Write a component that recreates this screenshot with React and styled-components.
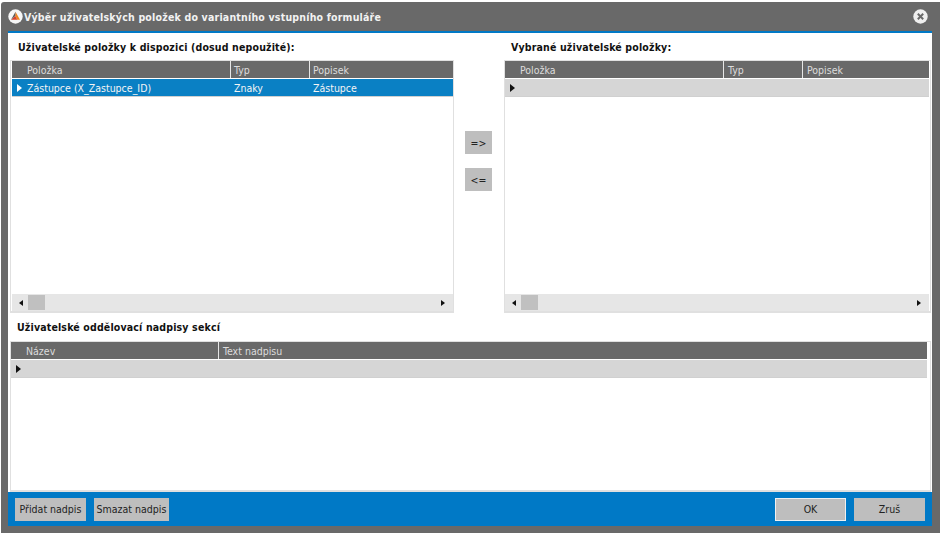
import React from 'react';
import styled, { createGlobalStyle } from 'styled-components';

const GlobalStyle = createGlobalStyle`
    html, body { margin: 0; padding: 0; background: #fff; }
    body { font-family: "DejaVu Sans", "Liberation Sans", Arial, sans-serif; font-stretch: condensed; font-size: 10.5px; color: #222; }
`;

const Page = styled.div`
    width: 940px;
    height: 534px;
    padding: 2px 0 1px 1px;
    box-sizing: border-box;
    overflow: hidden;
`;

const Dialog = styled.div`
    height: 100%;
    display: flex;
    flex-direction: column;
    padding: 0 8px 7px 7px;
    box-sizing: border-box;
    background: #696969;
    border-top-left-radius: 3px;
`;

const TitleBar = styled.div`
    height: 29px;
    flex: none;
    display: flex;
    align-items: center;
    gap: 1px;
    padding: 0 4px 0 0;
`;

const Title = styled.div`
    flex: 1;
    font-size: 10.5px;
    font-weight: 700;
    letter-spacing: 0.2px;
    color: #f2f2f2;
`;

const Body = styled.div`
    flex: 1;
    min-height: 0;
    display: flex;
    flex-direction: column;
    background: #fff;
    border-top: 2px solid #0079c6;
    padding: 0 1px 0 2px;
`;

const TopRow = styled.div`
    display: flex;
    height: 280px;
    flex: none;
`;

const Column = styled.div`
    width: ${props => props.$width}px;
    flex: none;
    display: flex;
    flex-direction: column;
`;

const Heading = styled.div`
    height: ${props => props.$height}px;
    flex: none;
    display: flex;
    align-items: center;
    padding-left: ${props => props.$indent}px;
    font-size: 10.5px;
    font-weight: 700;
    letter-spacing: 0.16px;
    color: #111;
`;

const Panel = styled.div`
    flex: 1;
    min-height: 0;
    display: flex;
    flex-direction: column;
    border: 1px solid #e0e0e0;
    border-width: 1px 1px 2px 1px;
    padding-left: ${props => props.$insetLeft}px;
    padding-right: ${props => props.$insetRight}px;
`;

const HeaderRow = styled.div`
    height: 17px;
    flex: none;
    display: flex;
    background: #696969;
    border-bottom: 1px solid #fff;
`;

const HeaderCell = styled.div`
    width: ${props => props.$width}px;
    flex: none;
    box-sizing: border-box;
    padding-left: ${props => props.$indent}px;
    line-height: 18px;
    color: #dcdcdc;
    border-right: ${props => props.$last ? 'none' : '1px solid #e6e6e6'};
`;

const DataRow = styled.div`
    height: 17px;
    flex: none;
    display: flex;
    align-items: center;
    background: ${props => props.$selected ? '#0a80c4' : '#d6d6d6'};
    border-bottom: 1px solid #d0d0d0;
    color: #f4f4f4;
`;

const RowMarker = styled.span`
    width: 0;
    height: 0;
    flex: none;
    margin-left: 5px;
    border-style: solid;
    border-width: 4px 0 4px 5px;
    border-color: transparent transparent transparent ${props => props.$selected ? '#fff' : '#111'};
`;

const DataCell = styled.div`
    width: ${props => props.$width}px;
    flex: none;
    box-sizing: border-box;
    padding-left: ${props => props.$indent}px;
`;

const GridSpace = styled.div`
    flex: 1;
`;

const ScrollBar = styled.div`
    height: 17px;
    flex: none;
    display: flex;
    align-items: center;
    background: #e6e6e6;
    padding: 0 8px 0 7px;
`;

const ScrollThumb = styled.div`
    width: 17px;
    height: 15px;
    margin-left: 5px;
    background: #c0c0c0;
`;

const ScrollArrow = styled.span`
    width: 0;
    height: 0;
    flex: none;
    border-style: solid;
    border-width: 3.5px ${props => props.$right ? 0 : '4px'} 3.5px ${props => props.$right ? '4px' : 0};
    border-color: transparent ${props => props.$right ? 'transparent' : '#111'} transparent ${props => props.$right ? '#111' : 'transparent'};
    margin-left: ${props => props.$right ? 'auto' : 0};
`;

const MoveColumn = styled.div`
    width: 50px;
    flex: none;
    display: flex;
    flex-direction: column;
    align-items: flex-start;
    gap: 14px;
    padding: 98px 0 0 11px;
    box-sizing: border-box;
`;

const MoveButton = styled.div`
    width: 27px;
    height: 23px;
    display: flex;
    align-items: center;
    justify-content: center;
    background: #bebebe;
    color: #222;
`;

const Footer = styled.div`
    height: 34px;
    flex: none;
    display: flex;
    align-items: center;
    gap: 8px;
    padding: 0 7px 0 7px;
    background: #0079c6;
`;

const FooterButton = styled.div`
    width: ${props => props.$width}px;
    height: 23px;
    flex: none;
    box-sizing: border-box;
    display: flex;
    align-items: center;
    justify-content: center;
    background: #bebebe;
    color: #222;
    border: ${props => props.$focused ? '1px solid #f0f0f0' : 'none'};
`;

const FooterGap = styled.div`
    flex: 1;
`;

const Logo = () => (
    <svg width="15" height="15" viewBox="0 0 15 15">
        <circle cx="7.5" cy="7.5" r="7.2" fill="#f6f6f6" />
        <path d="M7.5 2.8 L12 10.8 L9.4 10.8 L7.2 7 Z" fill="#ee8420" />
        <path d="M7.2 7 L9.4 10.8 L3 10.8 Z" fill="#d8402a" />
        <path d="M7.5 2.8 L7.2 7 L3 10.8 Z" fill="#5a5a5a" />
    </svg>
);

const CloseIcon = () => (
    <svg width="15" height="15" viewBox="0 0 15 15">
        <circle cx="7.5" cy="7.5" r="7.2" fill="#efefef" />
        <path d="M4.8 4.8 L10.2 10.2 M10.2 4.8 L4.8 10.2" stroke="#696969" strokeWidth="2" />
    </svg>
);

const ItemGrid = ({ widths, indents, insetLeft, insetRight, selected }) => (
    <Panel $insetLeft={insetLeft} $insetRight={insetRight}>
        <HeaderRow>
            <HeaderCell $width={widths[0]} $indent={indents[0]}>Položka</HeaderCell>
            <HeaderCell $width={widths[1]} $indent={indents[1]}>Typ</HeaderCell>
            <HeaderCell $width={widths[2]} $indent={indents[1]} $last>Popisek</HeaderCell>
        </HeaderRow>
        <DataRow $selected={selected}>
            <RowMarker $selected={selected} />
            {selected && (
                <>
                    <DataCell $width={widths[0] - 10} $indent={5}>Zástupce (X_Zastupce_ID)</DataCell>
                    <DataCell $width={widths[1]} $indent={indents[1]}>Znaky</DataCell>
                    <DataCell $width={widths[2]} $indent={indents[1]}>Zástupce</DataCell>
                </>
            )}
        </DataRow>
        <GridSpace />
        <ScrollBar>
            <ScrollArrow />
            <ScrollThumb />
            <ScrollArrow $right />
        </ScrollBar>
    </Panel>
);

const App = () => (
    <Page>
        <GlobalStyle />
        <Dialog>
            <TitleBar>
                <Logo />
                <Title>Výběr uživatelských položek do variantního vstupního formuláře</Title>
                <CloseIcon />
            </TitleBar>
            <Body>
                <TopRow>
                    <Column $width={444}>
                        <Heading $height={27} $indent={8}>Uživatelské položky k dispozici (dosud nepoužité):</Heading>
                        <ItemGrid widths={[219, 79, 143]} indents={[15, 3]} insetLeft={1} insetRight={0} selected />
                    </Column>
                    <MoveColumn>
                        <MoveButton>=&gt;</MoveButton>
                        <MoveButton>&lt;=</MoveButton>
                    </MoveColumn>
                    <Column $width={427}>
                        <Heading $height={27} $indent={7}>Vybrané uživatelské položky:</Heading>
                        <ItemGrid widths={[219, 79, 126]} indents={[15, 4]} insetLeft={0} insetRight={1} />
                    </Column>
                </TopRow>
                <Heading $height={28} $indent={7}>Uživatelské oddělovací nadpisy sekcí</Heading>
                <Panel $insetLeft={0} $insetRight={3}>
                    <HeaderRow>
                        <HeaderCell $width={208} $indent={15}>Název</HeaderCell>
                        <HeaderCell $width={708} $indent={4} $last>Text nadpisu</HeaderCell>
                    </HeaderRow>
                    <DataRow>
                        <RowMarker />
                    </DataRow>
                    <GridSpace />
                </Panel>
            </Body>
            <Footer>
                <FooterButton $width={71}>Přidat nadpis</FooterButton>
                <FooterButton $width={75}>Smazat nadpis</FooterButton>
                <FooterGap />
                <FooterButton $width={71} $focused>OK</FooterButton>
                <FooterButton $width={71}>Zruš</FooterButton>
            </Footer>
        </Dialog>
    </Page>
);

export default App;
